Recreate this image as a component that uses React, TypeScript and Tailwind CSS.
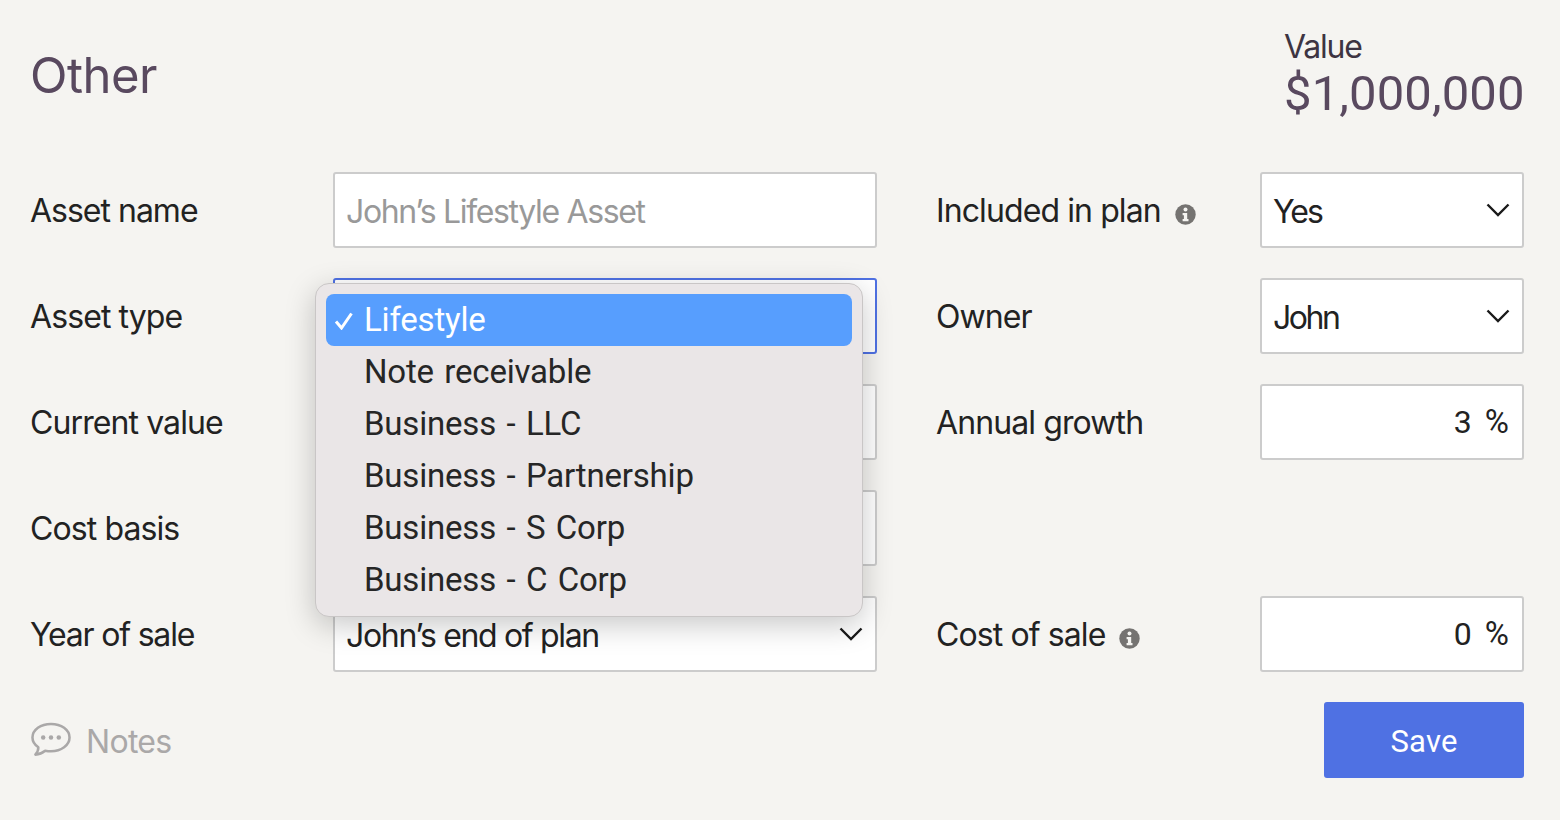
import React from "react";

const Chevron = () => (
  <svg width="24" height="14" viewBox="0 0 24 14" fill="none" className="shrink-0">
    <path d="M1.500 1.500 L12 12 L22.500 1.500" stroke="#1a1a1a" strokeWidth="2.400" />
  </svg>
);

const Info = () => (
  <svg width="21" height="21" viewBox="0 0 21 21" className="shrink-0">
    <circle cx="10.500" cy="10.500" r="10.200" fill="#757371" />
    <circle cx="10.500" cy="5.600" r="2" fill="#f5f4f1" />
    <path d="M7.600 9h4.600v6h1.300v2.200H7.600V15h1.300v-3.800H7.600z" fill="#f5f4f1" />
  </svg>
);

const Field = ({ children, w, className = "" }: { children?: React.ReactNode; w: string; className?: string }) => (
  <div className={`${w} h-[76px] shrink-0 flex items-center justify-between bg-white border-2 border-[#cccccc] rounded-[3px] pl-[11px] pr-[12px] ${className}`}>
    {children}
  </div>
);

const Txt = ({ children, className = "" }: { children: React.ReactNode; className?: string }) => (
  <span className={`pt-[3px] ${className}`}>{children}</span>
);

const Row = ({ label, labelClass = "", left, rightLabel, right }: { label: string; labelClass?: string; left: React.ReactNode; rightLabel?: React.ReactNode; right?: React.ReactNode }) => (
  <div className="flex items-center h-[76px]">
    <div className={`w-[302px] shrink-0 pt-[2px] -indent-[1px] ${labelClass}`}>{label}</div>
    {left}
    <div className="w-[323px] shrink-0 ml-[60px] pt-[2px] flex items-center -indent-[1px]">{rightLabel}</div>
    {right}
  </div>
);

const Pct = ({ v }: { v: string }) => (
  <Field w="w-[264px]" className="justify-end !pr-[13px]">
    <span className="pb-[1px] font-['Roboto',sans-serif] tracking-normal">{v}</span>
    <span className="pb-[1px] ml-[13px] text-[33px] font-['Roboto',sans-serif] tracking-normal">%</span>
  </Field>
);

const options = ["Note receivable", "Business - LLC", "Business - Partnership", "Business - S Corp", "Business - C Corp"];

export default function App() {
  return (
    <div className="relative w-[1560px] h-[820px] overflow-hidden bg-[#f5f4f1] text-[#222222] text-[32px] leading-[40px] font-['Inter','Liberation_Sans',sans-serif] tracking-[-0.9px] pr-[36px] pl-[31px]">
      <div className="h-[172px] flex justify-between">
        <h1 className="-ml-[1px] mt-[46px] text-[49px] leading-[60px] text-[#59495f] tracking-[-0.5px]">Other</h1>
        <div className="pt-[27px] w-[240px]">
          <div className="leading-[40px] text-[#3d3442] tracking-[-1.2px]">Value</div>
          <div className="text-[49px] leading-[54px] text-[#59495f] tracking-[0.1px] font-['Roboto',sans-serif]">$1,000,000</div>
        </div>
      </div>

      <div className="flex flex-col gap-[30px]">
        <Row
          label="Asset name"
          labelClass="tracking-[-1px]"
          left={<Field w="w-[544px]"><Txt className="text-[#999999] tracking-[-1.35px]">John’s Lifestyle Asset</Txt></Field>}
          rightLabel={<><span>Included in plan</span><span className="ml-[14px] mt-[6px]"><Info /></span></>}
          right={<Field w="w-[264px]"><Txt className="tracking-[-2px]">Yes</Txt><Chevron /></Field>}
        />
        <Row
          label="Asset type"
          left={<Field w="w-[544px]" className="!border-[#4f71e3]"><span /><Chevron /></Field>}
          rightLabel="Owner"
          right={<Field w="w-[264px]"><Txt className="tracking-[-2.500px]">John</Txt><Chevron /></Field>}
        />
        <Row
          label="Current value"
          left={<Field w="w-[544px]" />}
          rightLabel="Annual growth"
          right={<Pct v="3" />}
        />
        <Row label="Cost basis" left={<Field w="w-[544px]" />} />
        <Row
          label="Year of sale"
          labelClass="tracking-[-1.2px]"
          left={<Field w="w-[544px]"><Txt className="tracking-[-1.33px]">John’s end of plan</Txt><Chevron /></Field>}
          rightLabel={<><span>Cost of sale</span><span className="ml-[14px] mt-[6px]"><Info /></span></>}
          right={<Pct v="0" />}
        />
      </div>

      <div className="mt-[30px] flex justify-between items-center">
        <div className="flex items-center text-[#aaa8a8]">
          <svg width="40" height="36" viewBox="0 0 41 36" fill="none" className="mr-[15px]">
            <path d="M20.500 1.500C10 1.500 1.500 7.600 1.500 15.500c0 4 2.300 7.500 6 10 .2 2.500-1 5-3 7.500 3.500-.3 7.500-2 10-4 2 .4 4 .6 6 .6 10.500 0 19-6.200 19-14.100S31 1.500 20.500 1.500z" stroke="#aaa8a8" strokeWidth="2.600" strokeLinejoin="round" />
            <circle cx="12.500" cy="15.500" r="2.300" fill="#aaa8a8" />
            <circle cx="20.500" cy="15.500" r="2.300" fill="#aaa8a8" />
            <circle cx="28.500" cy="15.500" r="2.300" fill="#aaa8a8" />
          </svg>
          <Txt className="tracking-[-0.7px]">Notes</Txt>
        </div>
        <button className="w-[200px] h-[76px] pt-[3px] bg-[#4f71e3] rounded-[3px] text-white text-[31px] font-['Roboto',sans-serif] tracking-[0.2px]">Save</button>
      </div>

      <div className="absolute left-[315px] top-[283px] w-[548px] h-[334px] rounded-[14px] bg-[#eae6e7] border border-[#c9c6c6] shadow-[0_8px_30px_rgba(0,0,0,0.22)] px-[10px] pt-[10px] font-['Roboto',sans-serif] tracking-[-0.2px] [word-spacing:2.500px] text-[#262626] text-[33px]">
        <div className="relative h-[52px] pb-[1px] rounded-[8px] bg-[#579efe] text-white flex items-center pl-[38px]">
          <svg width="20" height="18" viewBox="0 0 20 18" fill="none" className="absolute left-[8px] top-[18px]">
            <path d="M2 9.500 L7.500 16 L17.500 1.500" stroke="#ffffff" strokeWidth="3" />
          </svg>
          Lifestyle
        </div>
        {options.map((o) => (
          <div key={o} className="h-[52px] pb-[1px] flex items-center pl-[38px]">{o}</div>
        ))}
      </div>
    </div>
  );
}
